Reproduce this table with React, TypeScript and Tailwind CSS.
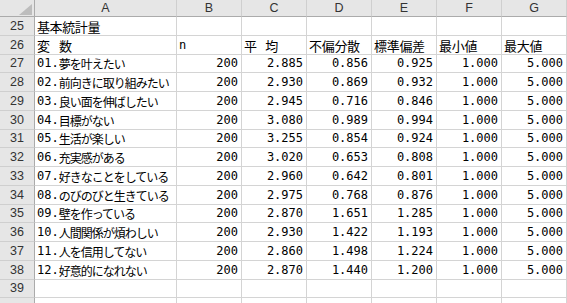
import React from "react";

const data: [string, string, string, string, string][] = [
  ["01.", "夢を叶えたい", "2.885", "0.856", "0.925"],
  ["02.", "前向きに取り組みたい", "2.930", "0.869", "0.932"],
  ["03.", "良い面を伸ばしたい", "2.945", "0.716", "0.846"],
  ["04.", "目標がない", "3.080", "0.989", "0.994"],
  ["05.", "生活が楽しい", "3.255", "0.854", "0.924"],
  ["06.", "充実感がある", "3.020", "0.653", "0.808"],
  ["07.", "好きなことをしている", "2.960", "0.642", "0.801"],
  ["08.", "のびのびと生きている", "2.975", "0.768", "0.876"],
  ["09.", "壁を作っている", "2.870", "1.651", "1.285"],
  ["10.", "人間関係が煩わしい", "2.930", "1.422", "1.193"],
  ["11.", "人を信用してない", "2.860", "1.498", "1.224"],
  ["12.", "好意的になれない", "2.870", "1.440", "1.200"],
];

const mono = "font-['DejaVu_Sans_Mono',monospace] text-[12px]";
const jp = "font-['Noto_Sans_CJK_JP',sans-serif] text-[13px]";
const jpTight = "font-['Noto_Sans_CJK_JP',sans-serif] text-[12px] tracking-[-1px]";
const hdrFont = "font-['Liberation_Sans',sans-serif] text-[12.5px] text-[#333]";

function RowHead({ n, h }: { n: string; h: string }) {
  return (
    <div
      className={`${h} w-[35px] shrink-0 bg-[#e6e6e6] border-r border-b border-r-[#ababab] border-b-[#cfcfcf] flex items-center justify-center ${hdrFont}`}
    >
      {n}
    </div>
  );
}

function Cell({
  w,
  children,
  right,
}: {
  w: string;
  children?: React.ReactNode;
  right?: boolean;
}) {
  return (
    <div
      className={`${w} shrink-0 h-full border-r border-b border-[#d4d4d4] flex items-end overflow-hidden whitespace-nowrap leading-[15px] pb-[1px] ${
        right ? "justify-end pr-[3px]" : "justify-start pl-[2px]"
      }`}
    >
      {children}
    </div>
  );
}

export default function App() {
  const colLetters = ["A", "B", "C", "D", "E", "F", "G"];
  const widths = ["w-[142px]", "w-[65px]", "w-[65px]", "w-[65px]", "w-[65px]", "w-[65px]", "w-[65px]"];

  const rows: React.ReactNode[] = [];
  const heightFor = (i: number) => (i % 4 === 2 ? "h-[18px]" : "h-[19px]");

  rows.push(
    <div key="25" className={`flex ${heightFor(0)}`}>
      <RowHead n="25" h={heightFor(0)} />
      <Cell w={widths[0]}>
        <span className={`${jp} tracking-[-0.4px]`}>基本統計量</span>
      </Cell>
      {widths.slice(1).map((w, k) => (
        <Cell key={k} w={w} />
      ))}
    </div>
  );
  const heads = ["n", "平 均", "不偏分散", "標準偏差", "最小値", "最大値"];
  rows.push(
    <div key="26" className={`flex ${heightFor(1)}`}>
      <RowHead n="26" h={heightFor(1)} />
      <Cell w={widths[0]}>
        <span className={`${jp} [word-spacing:6px]`}>変 数</span>
      </Cell>
      {heads.map((t, k) => (
        <Cell key={k} w={widths[k + 1]}>
          {t === "n" ? (
            <span className={mono}>n</span>
          ) : (
            <span className={`${jp} tracking-[-0.3px] [word-spacing:6px]`}>{t}</span>
          )}
        </Cell>
      ))}
    </div>
  );
  data.forEach((d, idx) => {
    const i = idx + 2;
    const h = heightFor(i);
    const vals = ["200", d[2], d[3], d[4], "1.000", "5.000"];
    rows.push(
      <div key={i} className={`flex ${h}`}>
        <RowHead n={String(25 + i)} h={h} />
        <Cell w={widths[0]}>
          <span className={mono}>{d[0]}</span>
          <span className={jpTight}>{d[1]}</span>
        </Cell>
        {vals.map((v, k) => (
          <Cell key={k} w={widths[k + 1]} right>
            <span className={mono}>{v}</span>
          </Cell>
        ))}
      </div>
    );
  });
  [14, 15].forEach((i) => {
    const h = heightFor(i);
    rows.push(
      <div key={i} className={`flex ${h}`}>
        <RowHead n={i === 14 ? "39" : ""} h={h} />
        {widths.map((w, k) => (
          <Cell key={k} w={w} />
        ))}
      </div>
    );
  });

  return (
    <div className="w-[567px] h-[303px] overflow-hidden bg-white text-black">
      <div className="flex h-[17px]">
        <div className="relative w-[35px] shrink-0 h-full bg-[#e6e6e6] border-r border-b border-r-[#ababab] border-b-[#ababab]">
          <svg className="absolute left-[19px] top-[4px]" width="13" height="11" viewBox="0 0 13 11">
            <polygon points="13,0 13,11 0,11" fill="#bdbdbd" />
          </svg>
        </div>
        {colLetters.map((c, k) => (
          <div
            key={c}
            className={`${widths[k]} shrink-0 h-full bg-[#e6e6e6] border-r border-b border-r-[#cfcfcf] border-b-[#ababab] flex items-center justify-center ${hdrFont}`}
          >
            {c}
          </div>
        ))}
      </div>
      {rows}
    </div>
  );
}
